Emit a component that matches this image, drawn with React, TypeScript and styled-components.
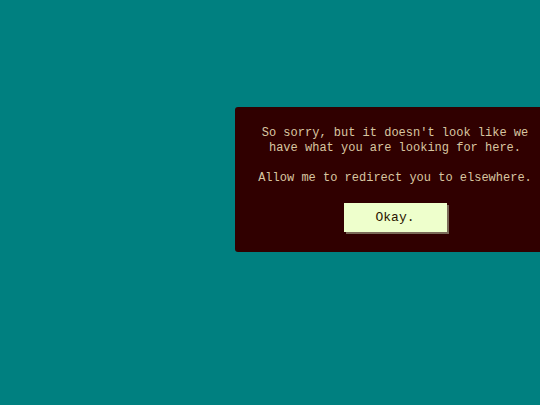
import React from 'react';
import styled, { createGlobalStyle } from 'styled-components';

const GlobalStyle = createGlobalStyle`
  html, body {
    margin: 0;
    padding: 0;
    background: #008080;
    overflow: hidden;
  }
`;

const Screen = styled.div`
  width: 540px;
  height: 405px;
  display: flex;
  align-items: flex-start;
  padding: 107px 0 0 235px;
  box-sizing: border-box;
  overflow: hidden;
`;

const Dialog = styled.div`
  flex-shrink: 0;
  width: 320px;
  box-sizing: border-box;
  padding: 19px 0 20px;
  background: #300000;
  border-radius: 3px;
  display: flex;
  flex-direction: column;
  align-items: center;
  font-family: 'Liberation Mono', 'Courier New', monospace;
  font-size: 12px;
  line-height: 15px;
  color: #d8c6a0;
  text-align: center;
`;

const Message = styled.p<{ $gap?: number }>`
  margin: 0 0 ${(p) => p.$gap ?? 0}px;
  white-space: pre-line;
`;

const OkButton = styled.button`
  margin-top: 17px;
  width: 103px;
  height: 29px;
  border: none;
  border-radius: 0;
  background: #eeffcc;
  color: #2a1400;
  font-family: 'Liberation Mono', 'Courier New', monospace;
  font-size: 13px;
  box-shadow: 2px 2px 0 #7a6a58;
  cursor: pointer;
`;

export default function App() {
  return (
    <>
      <GlobalStyle />
      <Screen>
        <Dialog>
          <Message $gap={15}>
            {"So sorry, but it doesn't look like we\nhave what you are looking for here."}
          </Message>
          <Message>Allow me to redirect you to elsewhere.</Message>
          <OkButton>Okay.</OkButton>
        </Dialog>
      </Screen>
    </>
  );
}
